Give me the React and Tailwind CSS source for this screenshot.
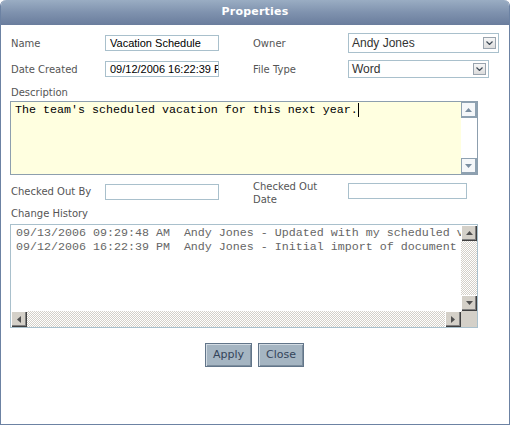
import React from "react";

const label = "text-[10px] text-[#555] leading-[13px]";
const mono = "font-['Liberation_Mono',monospace] text-[11.67px] leading-[14px] whitespace-pre";

function Chevron() {
  return (
    <span className="w-[13px] h-[12px] border border-[#9aa4ae] bg-gradient-to-b from-[#f7f7f7] to-[#dcdcdc] flex items-center justify-center">
      <svg width="7" height="4" viewBox="0 0 7 4">
        <path d="M0.5 0.5 L3.5 3.5 L6.5 0.5" fill="none" stroke="#3e4a56" strokeWidth="1.2" />
      </svg>
    </span>
  );
}

function Select({ value, width, height }) {
  return (
    <div
      className={`${width} ${height} border border-[#a9c0cc] bg-white flex items-center justify-between pl-[3px] pr-[2px] text-[12px] text-[#333] font-['Liberation_Sans',sans-serif]`}
    >
      <span>{value}</span>
      <Chevron />
    </div>
  );
}

function TextBox({ value, className = "" }) {
  return (
    <div
      className={`h-[16px] border border-[#a9c0cc] bg-white overflow-hidden whitespace-nowrap pl-[4px] text-[11px] leading-[14px] text-black font-['Liberation_Sans',sans-serif] ${className}`}
    >
      {value}
    </div>
  );
}

// Soft blue-gray scroll arrow used by the description box
function SoftArrowButton({ up }) {
  return (
    <div className="w-[16px] h-[16px] border border-[#8ea1b1] border-r-2 border-b-2 bg-[#f5f7f9] flex items-center justify-center">
      <svg width="7" height="4" viewBox="0 0 7 4">
        {up ? <path d="M0 4 L3.5 0 L7 4 Z" fill="#7a8ea0" /> : <path d="M0 0 L3.5 4 L7 0 Z" fill="#7a8ea0" />}
      </svg>
    </div>
  );
}

// Classic 3D scrollbar button
function ClassicButton({ dir }) {
  const paths = {
    up: "M1 5 L4.5 1 L8 5 Z",
    down: "M1 1 L4.5 5 L8 1 Z",
    left: "M5 1 L1 4.5 L5 8 Z",
    right: "M1 1 L5 4.5 L1 8 Z",
  };
  const vertical = dir === "up" || dir === "down";
  return (
    <div className="w-[16px] h-[16px] bg-[#d4d0c8] shadow-[inset_1px_1px_0_#ffffff,inset_-1px_-1px_0_#404040,inset_-2px_-2px_0_#808080] flex items-center justify-center shrink-0">
      <svg width={vertical ? 9 : 6} height={vertical ? 6 : 9} viewBox={vertical ? "0 0 9 6" : "0 0 6 9"}>
        <path d={paths[dir]} fill="#505050" />
      </svg>
    </div>
  );
}

const dither =
  "bg-[repeating-conic-gradient(#d4d0c8_0_25%,#ffffff_0_50%)] bg-[length:2px_2px]";

export default function App() {
  return (
    <div className="w-[510px] h-[425px] bg-white border-x border-b border-[#6c82a3] rounded-t-[6px] overflow-hidden flex flex-col font-['DejaVu_Sans',sans-serif]">
      <div className="h-[25px] shrink-0 bg-gradient-to-b from-[#9aadc3] via-[#7f92ae] to-[#6a7d9d] flex items-center justify-center text-white font-bold text-[11px] tracking-[0.2px]">
        Properties
      </div>

      <div className="pl-[9px] pr-[10px] pt-[8px] flex flex-col">
        {/* Name / Owner */}
        <div className="h-[20px] flex items-center">
          <span className={`${label} w-[95px] pl-px`}>Name</span>
          <TextBox value="Vacation Schedule" className="w-[114px]" />
          <span className={`${label} w-[95px] ml-[34px]`}>Owner</span>
          <Select value="Andy Jones" width="w-[151px]" height="h-[20px]" />
        </div>

        {/* Date Created / File Type */}
        <div className="h-[20px] mt-[6px] flex items-center">
          <span className={`${label} w-[95px] pl-px`}>Date Created</span>
          <TextBox value="09/12/2006 16:22:39 PM" className="w-[114px]" />
          <span className={`${label} w-[95px] ml-[34px]`}>File Type</span>
          <Select value="Word" width="w-[141px]" height="h-[18px]" />
        </div>

        {/* Description */}
        <span className={`${label} mt-[7px] pl-px`}>Description</span>
        <div className="mt-[2px] w-[468px] h-[74px] border border-[#8d9fae] bg-[#ffffe0] flex">
          <div className="flex-1 overflow-hidden pl-[4px] pt-[1px]">
            <div className={`${mono} text-black flex items-center`}>
              <span>The team's scheduled vacation for this next year.</span>
              <span className="inline-block w-px h-[14px] bg-black" />
            </div>
          </div>
          <div className="w-[16px] bg-white flex flex-col justify-between">
            <SoftArrowButton up />
            <SoftArrowButton />
          </div>
        </div>

        {/* Checked out */}
        <div className="mt-[5px] h-[26px] flex items-start">
          <span className={`${label} w-[95px] pl-px mt-[5px]`}>Checked Out By</span>
          <div className="w-[114px] h-[16px] mt-[4px] border border-[#a9c0cc] bg-white" />
          <span className={`${label} w-[95px] ml-[34px]`}>
            Checked Out
            <br />
            Date
          </span>
          <div className="w-[119px] h-[16px] mt-[3px] border border-[#a9c0cc] bg-white" />
        </div>

        {/* Change history */}
        <span className={`${label} mt-[1px] pl-px`}>Change History</span>
        <div className="mt-[4px] w-[468px] h-[104px] border border-[#a9c0cc] bg-white flex flex-col">
          <div className="flex-1 flex min-h-0">
            <div className={`flex-1 overflow-hidden pl-[5px] pt-[1px] ${mono} text-[#666]`}>
              <div>09/13/2006 09:29:48 AM  Andy Jones - Updated with my scheduled vacation</div>
              <div>09/12/2006 16:22:39 PM  Andy Jones - Initial import of document</div>
            </div>
            <div className={`w-[16px] flex flex-col justify-between ${dither}`}>
              <ClassicButton dir="up" />
              <ClassicButton dir="down" />
            </div>
          </div>
          <div className="h-[16px] flex">
            <div className={`flex-1 flex justify-between ${dither}`}>
              <ClassicButton dir="left" />
              <ClassicButton dir="right" />
            </div>
            <div className="w-[16px] bg-[#d4d0c8]" />
          </div>
        </div>

        {/* Actions */}
        <div className="mt-[15px] flex justify-center gap-[6px]">
          <button className="w-[47px] h-[24px] bg-[#a5b5c2] border border-[#627589] shadow-[inset_1px_1px_0_#d3dce4,inset_-1px_-1px_0_#7d8e9e] text-[11px] text-[#34445a]">
            Apply
          </button>
          <button className="w-[46px] h-[24px] bg-[#a5b5c2] border border-[#627589] shadow-[inset_1px_1px_0_#d3dce4,inset_-1px_-1px_0_#7d8e9e] text-[11px] text-[#34445a]">
            Close
          </button>
        </div>
      </div>
    </div>
  );
}
